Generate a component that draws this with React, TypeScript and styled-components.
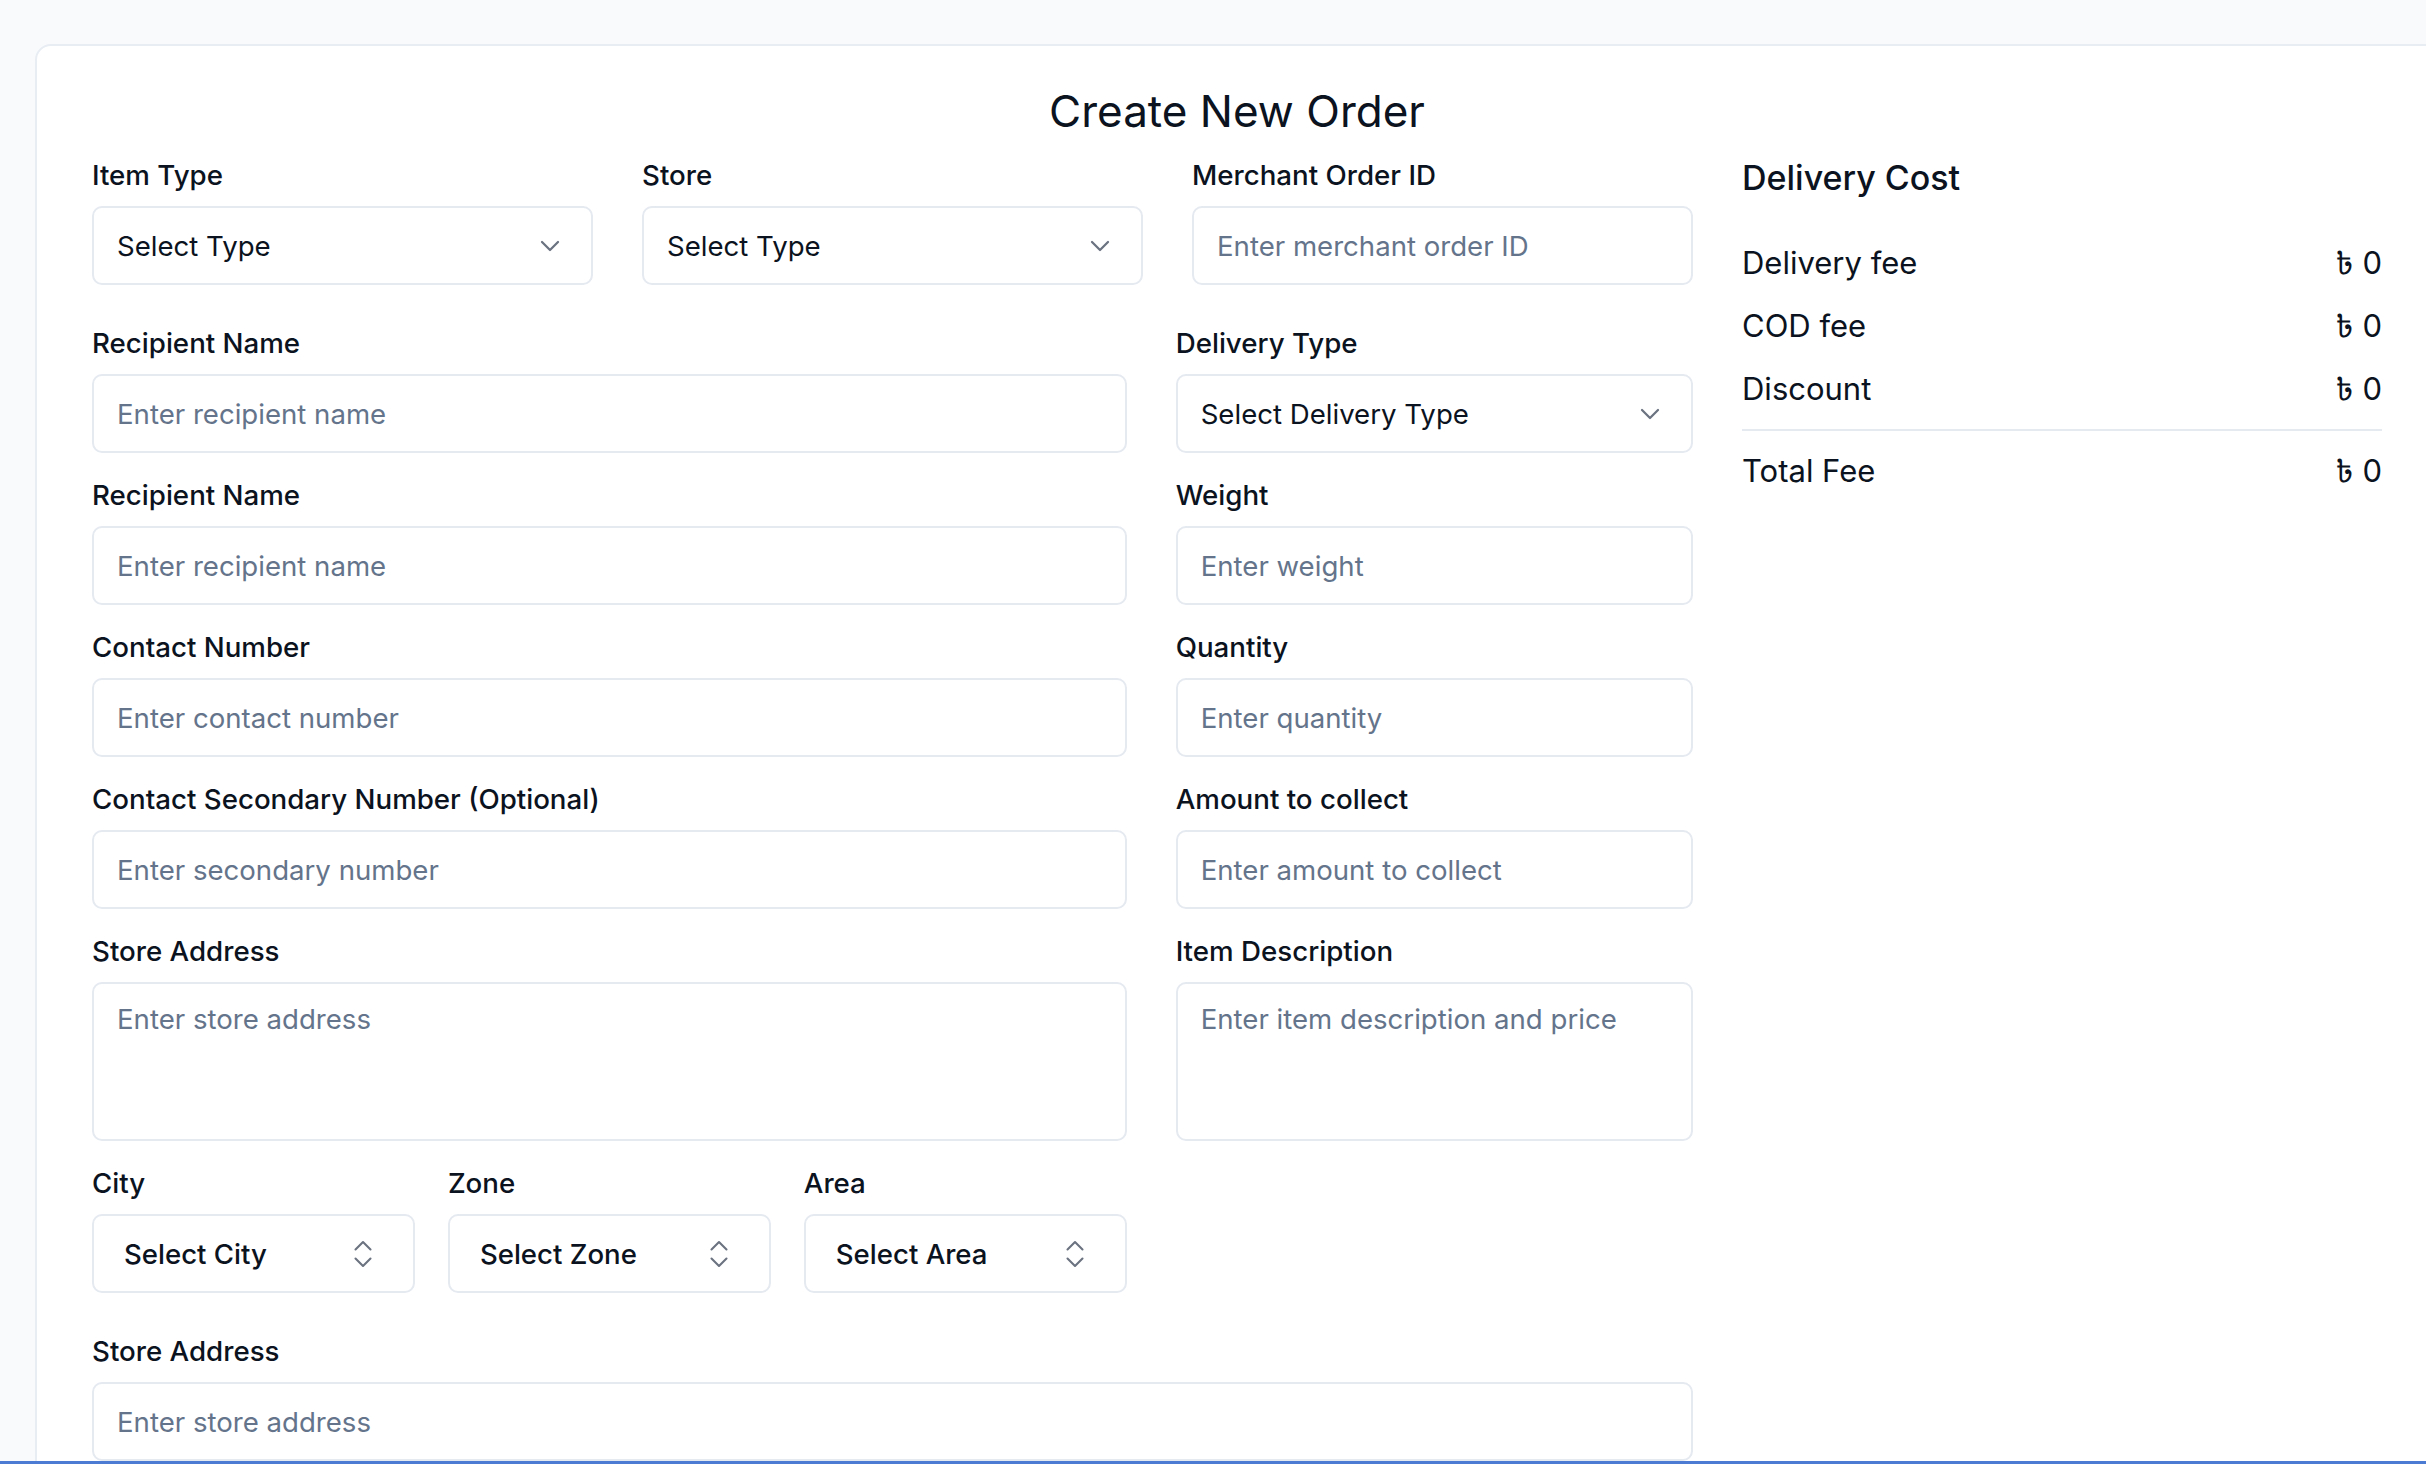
import React from 'react';
import styled, { createGlobalStyle } from 'styled-components';
import { ChevronDown, ChevronsUpDown } from 'lucide-react';

const GlobalStyle = createGlobalStyle`
  html, body {
    margin: 0;
    padding: 0;
    background: #f8fafc;
    overflow: hidden;
  }
  body {
    font-family: Inter, "Noto Sans", "DejaVu Sans", sans-serif;
    color: #0b1220;
  }
  * { box-sizing: border-box; }
`;

const Page = styled.div`
  padding: 44px 0 0 35px;
  min-height: 1464px;
`;

const Card = styled.div`
  width: 2406px;
  background: #fff;
  border: 2px solid #e8edf3;
  border-radius: 16px;
  padding: 38px 57px 60px 55px;
`;

const Title = styled.h1`
  margin: 0 0 20px;
  text-align: center;
  font-size: 44px;
  line-height: 54px;
  font-weight: 400;
  color: #0b1220;
`;

const Body = styled.div`
  display: flex;
  gap: 49px;
  align-items: flex-start;
`;

const Form = styled.div`
  flex: 1;
  display: flex;
  flex-direction: column;
  gap: 25px;
`;

const Row = styled.div<{ cols: string; gap?: number; extraTop?: number }>`
  display: grid;
  grid-template-columns: ${(p) => p.cols};
  column-gap: ${(p) => p.gap ?? 49}px;
  margin-top: ${(p) => p.extraTop ?? 0}px;
`;

const Field = styled.div`
  display: flex;
  flex-direction: column;
  gap: 13px;
  min-width: 0;
`;

const Label = styled.label`
  font-size: 27.7px;
  line-height: 35px;
  font-weight: 500;
  color: #0b1220;
`;

const controlBase = `
  width: 100%;
  background: #fff;
  border: 2px solid #e5e9f0;
  border-radius: 10px;
  font-family: Inter, "Noto Sans", sans-serif;
  font-size: 27.6px;
  color: #0b1220;
  outline: none;
`;

const Input = styled.input`
  ${controlBase}
  height: 79px;
  padding: 0 23px;
  &::placeholder { color: #64748b; }
`;

const TextArea = styled.textarea`
  ${controlBase}
  height: 159px;
  padding: 17px 23px;
  resize: none;
  line-height: 36px;
  &::placeholder { color: #64748b; }
`;

const SelectBox = styled.div<{ compact?: boolean }>`
  ${controlBase}
  height: 79px;
  display: flex;
  align-items: center;
  justify-content: space-between;
  padding: ${(p) => (p.compact ? '0 32px 0 30px' : '0 25px 0 23px')};
  font-weight: ${(p) => (p.compact ? 500 : 400)};
  svg { color: #6b7280; flex-shrink: 0; }
`;

const Aside = styled.aside`
  width: 640px;
`;

const AsideTitle = styled.h2`
  margin: 0 0 45px;
  font-size: 34px;
  line-height: 40px;
  font-weight: 500;
`;

const CostList = styled.div`
  display: flex;
  flex-direction: column;
  gap: 23px;
`;

const CostRow = styled.div`
  display: flex;
  justify-content: space-between;
  font-size: 31px;
  line-height: 40px;
`;

const Divider = styled.hr`
  border: none;
  border-top: 2px solid #e5e9f0;
  margin: -3px 0;
`;

const Amount = styled.span`
  font-family: Inter, "Noto Sans", "DejaVu Sans", "Noto Sans Bengali", sans-serif;
`;

const BottomEdge = styled.div`
  position: fixed;
  left: 0;
  right: 0;
  bottom: 0;
  height: 3px;
  background: #4b7bd3;
`;

const Select = ({ text }: { text: string }) => (
  <SelectBox>
    <span>{text}</span>
    <ChevronDown size={32} strokeWidth={1.7} />
  </SelectBox>
);

const PickSelect = ({ text }: { text: string }) => (
  <SelectBox compact>
    <span>{text}</span>
    <ChevronsUpDown size={36} strokeWidth={1.4} />
  </SelectBox>
);

const costs = ['Delivery fee', 'COD fee', 'Discount'];

export default function App() {
  return (
    <Page>
      <GlobalStyle />
      <Card>
        <Title>Create New Order</Title>
        <Body>
          <Form>
            <Row cols="1fr 1fr 1fr" style={{ marginBottom: 16 }}>
              <Field>
                <Label>Item Type</Label>
                <Select text="Select Type" />
              </Field>
              <Field>
                <Label>Store</Label>
                <Select text="Select Type" />
              </Field>
              <Field>
                <Label>Merchant Order ID</Label>
                <Input placeholder="Enter merchant order ID" />
              </Field>
            </Row>

            <Row cols="2fr 1fr">
              <Field>
                <Label>Recipient Name</Label>
                <Input placeholder="Enter recipient name" />
              </Field>
              <Field>
                <Label>Delivery Type</Label>
                <Select text="Select Delivery Type" />
              </Field>
            </Row>

            <Row cols="2fr 1fr">
              <Field>
                <Label>Recipient Name</Label>
                <Input placeholder="Enter recipient name" />
              </Field>
              <Field>
                <Label>Weight</Label>
                <Input placeholder="Enter weight" />
              </Field>
            </Row>

            <Row cols="2fr 1fr">
              <Field>
                <Label>Contact Number</Label>
                <Input placeholder="Enter contact number" />
              </Field>
              <Field>
                <Label>Quantity</Label>
                <Input placeholder="Enter quantity" />
              </Field>
            </Row>

            <Row cols="2fr 1fr">
              <Field>
                <Label>Contact Secondary Number (Optional)</Label>
                <Input placeholder="Enter secondary number" />
              </Field>
              <Field>
                <Label>Amount to collect</Label>
                <Input placeholder="Enter amount to collect" />
              </Field>
            </Row>

            <Row cols="2fr 1fr">
              <Field>
                <Label>Store Address</Label>
                <TextArea placeholder="Enter store address" />
              </Field>
              <Field>
                <Label>Item Description</Label>
                <TextArea placeholder="Enter item description and price" />
              </Field>
            </Row>

            <Row cols="2fr 1fr">
              <Row cols="1fr 1fr 1fr" gap={33}>
                <Field>
                  <Label>City</Label>
                  <PickSelect text="Select City" />
                </Field>
                <Field>
                  <Label>Zone</Label>
                  <PickSelect text="Select Zone" />
                </Field>
                <Field>
                  <Label>Area</Label>
                  <PickSelect text="Select Area" />
                </Field>
              </Row>
            </Row>

            <Row cols="1fr" extraTop={16}>
              <Field>
                <Label>Store Address</Label>
                <Input placeholder="Enter store address" />
              </Field>
            </Row>
          </Form>

          <Aside>
            <AsideTitle>Delivery Cost</AsideTitle>
            <CostList>
              {costs.map((c) => (
                <CostRow key={c}>
                  <span>{c}</span>
                  <Amount>৳ 0</Amount>
                </CostRow>
              ))}
              <Divider />
              <CostRow>
                <span>Total Fee</span>
                <Amount>৳ 0</Amount>
              </CostRow>
            </CostList>
          </Aside>
        </Body>
      </Card>
      <BottomEdge />
    </Page>
  );
}
